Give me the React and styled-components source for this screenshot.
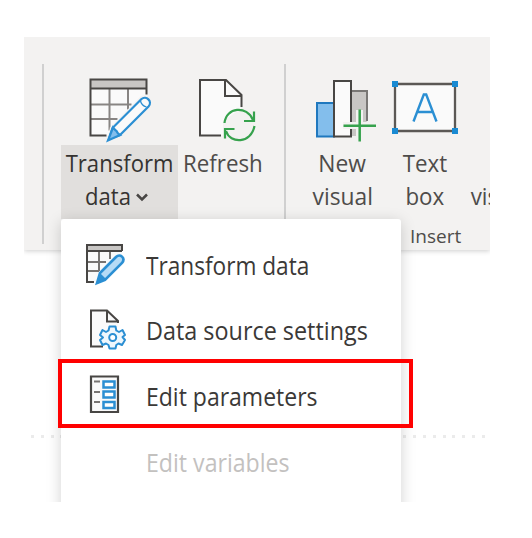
import React from 'react';
import styled, { createGlobalStyle } from 'styled-components';

const INK = '#484644';
const BLUE = '#2b8fd3';
const GREEN = '#36a24d';

const GlobalStyle = createGlobalStyle`
  * { box-sizing: border-box; }
  body { margin: 0; background: #fff; font-family: "Open Sans", "Noto Sans", sans-serif; }
`;

const Page = styled.main`
  position: relative;
  width: 532px;
  height: 538px;
  padding: 37px 42px 36px 24px;
  overflow: hidden;
`;

const Capture = styled.section`
  position: relative;
  width: 466px;
  height: 465px;
  overflow: hidden;
  background: #fff;
`;

const Ribbon = styled.header`
  display: flex;
  height: 213px;
  padding-left: 18px;
  background: #f3f2f1;
  box-shadow: 0 1px 5px rgba(0, 0, 0, 0.2);
`;

const Separator = styled.span`
  flex: none;
  width: 2px;
  height: 180px;
  margin-top: 27px;
  background: #d0d0d0;
`;

const QueryGroup = styled.div`
  display: flex;
  flex: none;
  width: 240px;
  padding-left: 17px;
`;

const InsertGroup = styled.div`
  flex: none;
  width: 260px;
  padding-left: 16px;
`;

const ButtonRow = styled.div`
  display: flex;
`;

const RibbonButton = styled.div`
  flex: none;
  width: ${(p) => p.$width}px;
  color: #4a4846;
`;

const IconSlot = styled.div`
  display: flex;
  justify-content: center;
  align-items: flex-end;
  height: 108px;
  padding-bottom: ${(p) => p.$lift || 0}px;
  padding-left: ${(p) => p.$indent || 0}px;
`;

const Caption = styled.div`
  display: flex;
  flex-direction: column;
  align-items: center;
  height: 74px;
  padding-top: 1px;
  font-size: 24px;
  line-height: 33px;
  background: ${(p) => (p.$active ? '#e1dfdd' : 'transparent')};
  color: ${(p) => (p.$active ? '#353331' : '#4e4c4a')};
`;

const Line = styled.span`
  display: flex;
  align-items: center;
  gap: 3px;
  padding-right: ${(p) => (p.$dropdown ? 8 : 0)}px;
  white-space: nowrap;
`;

const Squeezed = styled.span`
  white-space: nowrap;
  transform: scaleX(${(p) => p.$scale});
`;

const GroupName = styled.div`
  width: 54px;
  margin: 4px 0 0 108px;
  font-size: 19px;
  line-height: 26px;
  color: #4e4c4a;
`;

const CanvasEdge = styled.div`
  height: 3px;
  margin: 185px 2px 0 7px;
  background: repeating-linear-gradient(90deg, #ebebeb 0 3px, transparent 3px 9.8px);
`;

const Menu = styled.nav`
  position: absolute;
  left: 37px;
  top: 182px;
  width: 340px;
  height: 300px;
  padding-top: 13px;
  border-radius: 3px;
  background: #fff;
  box-shadow: 0 3px 15px rgba(0, 0, 0, 0.18);
`;

const MenuItem = styled.div`
  display: grid;
  grid-template-columns: 84.5px 1fr;
  align-items: center;
  height: 65.6px;
  font-size: 25px;
  line-height: 34px;
  color: ${(p) => (p.$disabled ? '#c3c1bf' : '#3b3937')};
`;

const MenuIcon = styled.span`
  display: block;
  height: 44px;
  padding-left: 22px;
`;

const MenuText = styled.span`
  justify-self: start;
  white-space: nowrap;
  transform: scaleX(${(p) => p.$scale});
  transform-origin: left center;
`;

const Highlight = styled.div`
  position: absolute;
  left: 58px;
  top: 359px;
  width: 355px;
  height: 69px;
  border: 4px solid #f00;
`;

const Svg = styled.svg`
  display: block;
  flex: none;
  overflow: visible;
`;

const TablePencil = () => (
  <Svg width="64" height="68" viewBox="0.5 0.5 64 68" fill="none">
    <path d="M3 3H59V30L33 59H3Z" fill="#fafafa" />
    <path d="M3 3H59V12H3Z" fill="#c8c6c4" />
    <path d="M22 12V54M40.500 12V33M3 28H44M3 42.500H30" stroke="#888583" strokeWidth="2" />
    <path d="M59 18V3H3V59H19M3 12H59" stroke={INK} strokeWidth="2" />
    <path d="M19 66L22.500 51L53 20C60 16 67 22 62 29L33 59Z" fill="#f3f2f1" />
    <path d="M21.500 62.500L25 51.500L54 22.500C58.500 18.500 65.500 25 61 30L32.500 58.500Z" fill="#fafafa" stroke={BLUE} strokeWidth="2.200" />
    <path d="M20.500 64L25.500 51Q28 54 29 54.500Q30 57 32.500 58.500Z" fill="#83beec" stroke={BLUE} strokeWidth="2.200" />
    <path d="M53 24.500Q54 29 59 30.500" stroke={BLUE} strokeWidth="1.300" />
  </Svg>
);

const RefreshPage = () => (
  <Svg width="58" height="66" viewBox="0 0 58 66" fill="none">
    <path d="M2 3H28L43 18V32L25 44V58.500H2Z" fill="#fafafa" />
    <path d="M23 58.500H2V3H28L43.500 18V30M27 3V19H44" stroke={INK} strokeWidth="2" />
    <path d="M26.500 46C28 30 49 28 55 43M56.500 49C53 67 32 67 28 54" stroke={GREEN} strokeWidth="2.200" />
    <path d="M56 34.500V44H46M27 61.500V52H36.500" stroke={GREEN} strokeWidth="2.200" />
  </Svg>
);

const ChartPlus = () => (
  <Svg width="62" height="64" viewBox="0 0 62 64" fill="none">
    <path d="M2 26H19V59.500H2Z" fill="#83beec" stroke="#1f78be" strokeWidth="2" />
    <path d="M36 14H52V44L43 59H36Z" fill="#c8c6c4" />
    <path d="M36 14H52V44" stroke="#797775" strokeWidth="2" />
    <path d="M19 4H36V59.500H19Z" fill="#fafafa" stroke={INK} strokeWidth="2" />
    <path d="M41 33H48V45H62V52H48V64H41V52H28V45H41Z" fill="#f3f2f1" />
    <path d="M44.700 32.500V64.500M28.500 48.800H61" stroke={GREEN} strokeWidth="2.500" />
  </Svg>
);

const TextFrame = () => (
  <Svg width="66" height="54" viewBox="0 0 66 54" fill="none">
    <path d="M3 3H63V50H3Z" fill="#fafafa" stroke="#5b5855" strokeWidth="2.300" />
    <path d="M21.500 40.500L31.800 13.500H34.200L44.500 40.500M25.500 31H40.500" stroke={BLUE} strokeWidth="2.400" />
    <path d="M0 0H6V6H0ZM60 0H66V6H60ZM0 47H6V53H0ZM60 47H66V53H60Z" fill="#198ad2" />
  </Svg>
);

const SmallTablePencil = () => (
  <Svg width="44" height="44" viewBox="0 1 44 44" fill="none">
    <path d="M4 3H39V10L16 40H4Z" fill="#fafafa" />
    <path d="M4 3H39V9H4Z" fill="#c8c6c4" />
    <path d="M16 9V29M27 9V17M4 20H23M4 29H16" stroke="#777472" strokeWidth="2" />
    <path d="M39 9V3H4V40H11M4 9H39" stroke={INK} strokeWidth="2" />
    <path d="M14 41L17 31L33 15C37 11 43 16 39 21L22 38Z" fill="#b5dbf6" stroke={BLUE} strokeWidth="2.600" />
    <path d="M14 42L17 31L23 37Z" fill={BLUE} />
  </Svg>
);

const PageGear = () => (
  <Svg width="44" height="44" viewBox="0 0 44 44" fill="none">
    <path d="M8 2.500H24L35 13V18L19 31V38.500H8Z" fill="#fafafa" />
    <path d="M20 38.500H8V2.500H24L35 13V15M24 2.500V13.500H35" stroke={INK} strokeWidth="2" />
    <path
      d="M26.500 18.500H32.500L33.300 22.500L36 24L39.500 22L42 27L39.500 29L42 32L39 37L35.500 35.500L33.300 37L32.500 40.500H26.500L25.500 37L23 35.500L19.500 37L17 32L20 29.500L17 27L19.500 22L23 24L25.500 22.500Z"
      fill="#eff7fd"
      stroke={BLUE}
      strokeWidth="2"
      strokeLinejoin="round"
    />
    <circle cx="29.700" cy="29.500" r="3.500" fill="#fff" stroke={BLUE} strokeWidth="2" />
  </Svg>
);

const FormFields = () => (
  <Svg width="44" height="44" viewBox="0 0 44 44" fill="none">
    <path d="M8 2.500H35V38H8Z" fill="#fafafa" stroke={INK} strokeWidth="2.200" />
    <path d="M11 7.500H17M11 18H17M11 28H17" stroke="#777472" strokeWidth="2" />
    <path d="M20.500 7.500H31.500V13.500H20.500ZM20.500 17.500H31.500V23.500H20.500ZM20.500 28H31.500V34H20.500Z" fill="#fff" stroke={BLUE} strokeWidth="2.500" />
  </Svg>
);

const Chevron = () => (
  <Svg width="12" height="8" viewBox="0 -1 12 8" fill="none">
    <path d="M1 1.500L6 6.500L11 1.500" stroke={INK} strokeWidth="2.500" />
  </Svg>
);

const menuItems = [
  { text: 'Transform data', scale: 0.905, Icon: SmallTablePencil },
  { text: 'Data source settings', scale: 0.935, Icon: PageGear },
  { text: 'Edit parameters', scale: 0.92, Icon: FormFields },
  { text: 'Edit variables', scale: 0.925, disabled: true },
];

const TopButton = ({ width, Icon, lift, indent, lines, scale, active, dropdown }) => (
  <RibbonButton $width={width}>
    <IconSlot $lift={lift} $indent={indent}>{Icon && <Icon />}</IconSlot>
    <Caption $active={active}>
      {lines.map((text, i) => {
        const hasChevron = dropdown && i === lines.length - 1;
        return (
          <Line key={i} $dropdown={hasChevron}>
            <Squeezed $scale={scale}>{text}</Squeezed>
            {hasChevron && <Chevron />}
          </Line>
        );
      })}
    </Caption>
  </RibbonButton>
);

export default function App() {
  return (
    <Page>
      <GlobalStyle />
      <Capture>
        <Ribbon>
          <Separator />
          <QueryGroup>
            <TopButton width={117} Icon={TablePencil} lines={['Transform', 'data']} scale={0.92} active dropdown />
            <TopButton width={89} Icon={RefreshPage} lift={2} indent={8} lines={['Refresh']} scale={0.93} />
          </QueryGroup>
          <Separator />
          <InsertGroup>
            <ButtonRow>
              <TopButton width={81} Icon={ChartPlus} lift={4} indent={6} lines={['New', 'visual']} scale={0.95} />
              <TopButton width={83} Icon={TextFrame} lift={10} lines={['Text', 'box']} scale={0.93} />
              <TopButton width={79} lines={['\u00a0', 'visuals']} scale={0.93} />
            </ButtonRow>
            <GroupName>Insert</GroupName>
          </InsertGroup>
        </Ribbon>
        <CanvasEdge />
        <Menu>
          {menuItems.map(({ text, scale, Icon, disabled }) => (
            <MenuItem key={text} $disabled={disabled}>
              <MenuIcon>{Icon && <Icon />}</MenuIcon>
              <MenuText $scale={scale}>{text}</MenuText>
            </MenuItem>
          ))}
        </Menu>
      </Capture>
      <Highlight />
    </Page>
  );
}
